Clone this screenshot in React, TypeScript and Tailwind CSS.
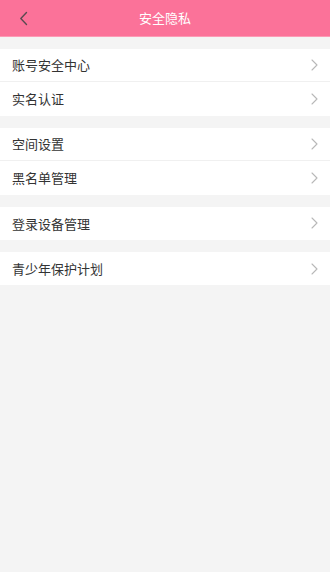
import React from "react";

const Chevron = () => (
  <svg width="7" height="12" viewBox="0 0 7 12" fill="none" className="shrink-0">
    <path d="M1 1l5 5-5 5" stroke="#b8b8b8" strokeWidth="1.1" strokeLinecap="round" strokeLinejoin="round" />
  </svg>
);

const Row = ({ label, divider }: { label: string; divider?: boolean }) => (
  <div className={`flex h-[33.4px] items-center justify-between bg-white pl-3 pr-3 ${divider ? "border-b border-[#f0f0f0]" : ""}`}>
    <span className="text-[13px] text-[#333333]">{label}</span>
    <Chevron />
  </div>
);

const Group = ({ items }: { items: string[] }) => (
  <div className="mt-3 flex flex-col bg-white">
    {items.map((it, i) => (
      <Row key={it} label={it} divider={i < items.length - 1} />
    ))}
  </div>
);

export default function App() {
  return (
    <div
      className="flex min-h-[572px] w-[330px] flex-col bg-[#f4f4f4]"
      style={{ fontFamily: '"Noto Sans CJK SC", "Noto Sans", sans-serif' }}
    >
      <div className="relative flex h-[37px] items-center justify-center bg-[#fb7299] border-b border-[#fc9ab5]">
        <svg width="9" height="15" viewBox="0 0 9 15" fill="none" className="absolute left-[19px] top-[11px]">
          <path d="M7.5 1.5L1.8 7.5l5.7 6" stroke="#5a4a50" strokeWidth="1.4" strokeLinecap="round" strokeLinejoin="round" />
        </svg>
        <span className="text-[13px] text-white">安全隐私</span>
      </div>
      <Group items={["账号安全中心", "实名认证"]} />
      <Group items={["空间设置", "黑名单管理"]} />
      <Group items={["登录设备管理"]} />
      <Group items={["青少年保护计划"]} />
    </div>
  );
}
